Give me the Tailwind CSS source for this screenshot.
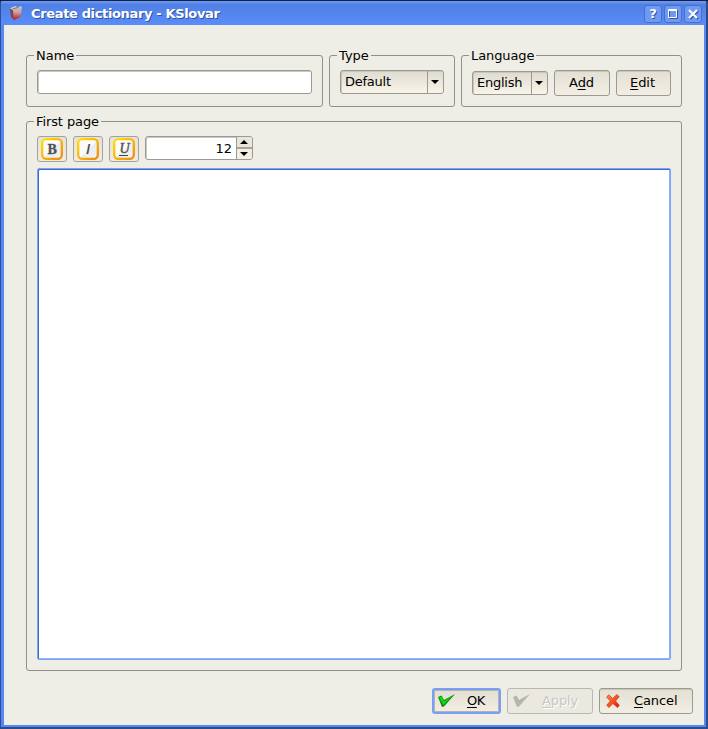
<!DOCTYPE html>
<html lang="en">
<head>
<meta charset="utf-8">
<title>Create dictionary - KSlovar</title>
<script src="https://cdn.jsdelivr.net/npm/@tailwindcss/browser@4"></script>
</head>
<body class="bg-[#0c1222]">
<svg width="0" height="0" class="absolute">
  <defs>
    <linearGradient id="gold" x1="0" y1="0" x2="1" y2="1"><stop offset="0" stop-color="#ffe100"/><stop offset="1" stop-color="#ee8a10"/></linearGradient>
    <linearGradient id="paper" x1="0" y1="0" x2="1" y2="1"><stop offset="0" stop-color="#ffffff"/><stop offset=".5" stop-color="#fafafa"/><stop offset=".55" stop-color="#e9ebee"/><stop offset="1" stop-color="#f5f5f5"/></linearGradient>
    <linearGradient id="red" x1="0" y1="0" x2="1" y2="1"><stop offset="0" stop-color="#ff8a50"/><stop offset=".5" stop-color="#f4551f"/><stop offset="1" stop-color="#f00808"/></linearGradient>
    <linearGradient id="book" x1="0" y1="0" x2="0" y2="1"><stop offset="0" stop-color="#c4c0c2"/><stop offset=".4" stop-color="#c9a3a2"/><stop offset="1" stop-color="#c80d0d"/></linearGradient>
  </defs>
</svg>
<div class="w-[708px] h-[729px] flex flex-col overflow-hidden rounded-t-[3px] bg-[#5587f5] border-l border-l-[#2f4f94] border-r-2 border-r-[#2f4984] border-b-2 border-b-[#2c4a8c] border-t border-t-[#14213d] font-['DejaVu_Sans',sans-serif] text-[13px] leading-4 tracking-[-0.1px] text-black">
  <header class="h-6 shrink-0 flex items-center pl-[7px] pr-[4px] bg-linear-to-b from-[#6f9cfa] via-[#5080e4] via-15% to-[#5a8cfb]">
    <svg class="w-4 h-4" viewBox="0 0 16 16">
      <path d="M4.500 5 14 2 12.500 12 6 15z" fill="url(#book)"/>
      <path d="M2 3.500 4.800 5 6 15 3 12z" fill="#84444a"/>
      <path d="M2 3.300 7.500 1l1.500 1 4.500-.5.500.8L5 5z" fill="#d8d5d6"/>
      <path d="M4 3.500 9 2l3 .5L5.500 4.500z" fill="#8d8287"/>
    </svg>
    <h1 class="ml-[7px] mt-px grow font-bold text-[13px] tracking-[-0.35px] text-white whitespace-nowrap [text-shadow:1px_1px_0_#34529a]">Create dictionary - KSlovar</h1>
    <div class="flex gap-[2px] mt-[2px]">
      <span class="w-[18px] h-[18px] rounded-[3px] border border-[#4a70c6] bg-[#7099f3] flex items-center justify-center text-white font-bold text-[13px] [text-shadow:1px_1px_0_#34529a]">?</span>
      <span class="w-[18px] h-[18px] rounded-[3px] border border-[#4a70c6] bg-[#7099f3] flex items-center justify-center"><svg width="12" height="12" viewBox="0 0 12 12" fill="none"><path d="M2.500 2.500h8v8h-8z" stroke="#34529a"/><path d="M1.500 1.500h8v8h-8zM1 2.500h9" stroke="#fff"/></svg></span>
      <span class="w-[18px] h-[18px] rounded-[3px] border border-[#4a70c6] bg-[#7099f3] flex items-center justify-center"><svg width="12" height="12" viewBox="0 0 12 12" fill="none" stroke-width="2.200"><path d="m3 3 8 8m0-8-8 8" stroke="#34529a"/><path d="m2 2 8 8m0-8-8 8" stroke="#fff"/></svg></span>
    </div>
  </header>

  <main class="grow ml-[3px] mr-[2px] mb-[2px] bg-[#eeeee6] pt-[30px] px-[22px] flex flex-col">
    <div class="flex gap-[6px] h-[52px] w-[656px] shrink-0">
      <section class="relative w-[297px] border border-[#8f8f8b] rounded-[3px] pl-[10px] pt-[14px]">
        <h2 class="absolute left-[7px] -top-[8px] px-[2px] bg-[#eeeee6] tracking-normal">Name</h2>
        <input aria-label="Name" class="block w-[275px] h-6 bg-white border border-[#9a9a92] rounded-[3px] shadow-[inset_1px_1px_0_#c9c9c2]">
      </section>
      <section class="relative w-[126px] border border-[#8f8f8b] rounded-[3px] pl-[10px] pt-[14px]">
        <h2 class="absolute left-[7px] -top-[8px] px-[2px] bg-[#eeeee6] tracking-normal">Type</h2>
        <div class="flex w-[104px] h-6 border border-[#9a9a92] rounded-[3px] bg-linear-to-b from-[#dfdbd0] to-[#f8f4e8] shadow-[inset_1px_1px_0_#c9c6bc]">
          <span class="grow pl-1 pt-[3px] tracking-[-0.25px]">Default</span>
          <span class="w-4 pr-px border-l border-[#9a9a92] flex items-center justify-center"><svg width="8" height="4" viewBox="0 0 8 4"><path d="M0 0h8L4 4z"/></svg></span>
        </div>
      </section>
      <section class="relative w-[221px] border border-[#8f8f8b] rounded-[3px] pl-[10px] pt-[14px] flex items-start">
        <h2 class="absolute left-[7px] -top-[8px] px-[2px] bg-[#eeeee6]">Language</h2>
        <div class="flex w-[76px] h-6 mt-px border border-[#9a9a92] rounded-[3px] bg-linear-to-b from-[#dfdbd0] to-[#f8f4e8] shadow-[inset_1px_1px_0_#c9c6bc]">
          <span class="grow pl-1 pt-[3px] tracking-[-0.25px]">English</span>
          <span class="w-4 pr-px border-l border-[#9a9a92] flex items-center justify-center"><svg width="8" height="4" viewBox="0 0 8 4"><path d="M0 0h8L4 4z"/></svg></span>
        </div>
        <button class="ml-[6px] w-14 h-[26px] pb-px pr-px border border-[#9a9a92] rounded-[3px] bg-linear-to-b from-[#e3dfd3] to-[#f3eee3] shadow-[inset_0_1px_0_#c9c6bc]">A<span class="underline underline-offset-2 decoration-1">d</span>d</button>
        <button class="ml-[6px] w-[55px] h-[26px] pb-px pr-[2px] border border-[#9a9a92] rounded-[3px] bg-linear-to-b from-[#e3dfd3] to-[#f3eee3] shadow-[inset_0_1px_0_#c9c6bc]"><span class="underline underline-offset-2 decoration-1">E</span>dit</button>
      </section>
    </div>

    <section class="relative mt-[14px] w-[656px] h-[550px] shrink-0 border border-[#8f8f8b] rounded-[3px] pl-[10px] pt-[14px]">
      <h2 class="absolute left-[7px] -top-[8px] px-[2px] bg-[#eeeee6]">First page</h2>
      <div class="flex gap-[6px]">
        <button aria-label="Bold" class="w-[30px] h-[26px] border border-[#a3a39b] rounded-[3px] bg-linear-to-b from-[#e6e2d8] to-[#f0ece1] flex items-center justify-center"><svg width="22" height="22" viewBox="0 0 22 22"><rect x="1.200" y="1.200" width="19.600" height="19.600" rx="4" fill="url(#paper)" stroke="url(#gold)" stroke-width="2.300"/><text x="11" y="16" text-anchor="middle" font-family="Liberation Serif, serif" font-size="14" font-weight="700" fill="#505050" stroke="#505050" stroke-width=".3">B</text></svg></button>
        <button aria-label="Italic" class="w-[30px] h-[26px] border border-[#a3a39b] rounded-[3px] bg-linear-to-b from-[#e6e2d8] to-[#f0ece1] flex items-center justify-center"><svg width="22" height="22" viewBox="0 0 22 22"><rect x="1.200" y="1.200" width="19.600" height="19.600" rx="4" fill="url(#paper)" stroke="url(#gold)" stroke-width="2.300"/><text x="11" y="16" text-anchor="middle" font-family="Liberation Sans, sans-serif" font-size="15" font-style="italic" fill="#444" stroke="#444" stroke-width=".2">I</text></svg></button>
        <button aria-label="Underline" class="w-[30px] h-[26px] border border-[#a3a39b] rounded-[3px] bg-linear-to-b from-[#e6e2d8] to-[#f0ece1] flex items-center justify-center"><svg width="22" height="22" viewBox="0 0 22 22"><rect x="1.200" y="1.200" width="19.600" height="19.600" rx="4" fill="url(#paper)" stroke="url(#gold)" stroke-width="2.300"/><text x="11.500" y="14.500" text-anchor="middle" font-family="Liberation Serif, serif" font-size="14" font-style="italic" fill="#505050" stroke="#505050" stroke-width=".4">U</text><path d="M6 17.500h9" stroke="#444"/></svg></button>
        <div class="flex w-[108px] h-6 border border-[#9a9a92] rounded-[3px] bg-white overflow-hidden shadow-[inset_1px_1px_0_#c9c9c2]">
          <span class="grow text-right pr-1 pt-[4px] tracking-normal">12</span>
          <span class="w-4 pr-px border-l border-[#9a9a92] bg-[#eeeade] flex flex-col">
            <span class="h-[10px] bg-[#e9e5da] flex items-center justify-center"><svg width="8" height="4" viewBox="0 0 8 4"><path d="M0 4h8L4 0z"/></svg></span>
            <span class="h-[2px] -mr-px bg-[#a5a49c]"></span>
            <span class="h-[10px] bg-[#f2eee2] flex items-center justify-center"><svg width="8" height="4" viewBox="0 0 8 4"><path d="M0 0h8L4 4z"/></svg></span>
          </span>
        </div>
      </div>
      <div class="mt-[6px] w-[634px] h-[492px] bg-white rounded-[2px] border border-[#7ba3f8] shadow-[inset_1px_1px_0_#3f69c4,inset_-1px_-1px_0_#8fb2fb]"></div>
    </section>

    <footer class="mt-[17px] w-[667px] flex justify-end">
      <button class="w-[69px] h-[26px] pl-[4px] border-2 border-[#769ff5] rounded-[3px] bg-linear-to-b from-[#e3dfd3] to-[#f3eee3] shadow-[inset_0_0_0_1px_#b5b3ab] flex items-center"><svg width="17" height="14" viewBox="0 0 17 14"><path d="M0 3 3.500 1.500 6 6 17 0 6 12.500 4 13z" fill="#14860f"/><path d="M1 3.500 3.500 2.500 6 7.500 14 2 5.500 11z" fill="#08df12"/></svg><span class="ml-[12px] tracking-[-0.5px]"><span class="underline underline-offset-2 decoration-1">O</span>K</span></button>
      <button disabled class="ml-[6px] w-[86px] h-[26px] pl-[5px] border border-[#b9b8b0] rounded-[3px] bg-[#ebe8df] text-[#c9c7c0] [text-shadow:1px_1px_0_#fff] flex items-center"><svg width="17" height="14" viewBox="0 0 17 14"><path d="M0 3 3.500 1.500 6 6 17 0 6 12.500 4 13z" fill="#b5b4ae"/></svg><span class="ml-[12px]"><span class="underline underline-offset-2 decoration-1">A</span>pply</span></button>
      <button class="ml-[6px] w-[94px] h-[26px] pl-[6px] border border-[#9a9a92] rounded-[3px] bg-linear-to-b from-[#e3dfd3] to-[#f3eee3] shadow-[inset_0_1px_0_#c9c6bc] flex items-center"><svg width="14" height="14" viewBox="0 0 14 14"><path d="M.5 3 3 .7 6.500 4.500 11 .5 13.200 2.800 9.500 7 13.300 11.300 11.500 13.500 6.800 9.500 3 13.500.7 11.300 4.300 7z" fill="url(#red)" stroke="#c83a1c" stroke-width=".7"/></svg><span class="ml-[14px]"><span class="underline underline-offset-2 decoration-1">C</span>ancel</span></button>
    </footer>
  </main>
</div>
</body>
</html>
